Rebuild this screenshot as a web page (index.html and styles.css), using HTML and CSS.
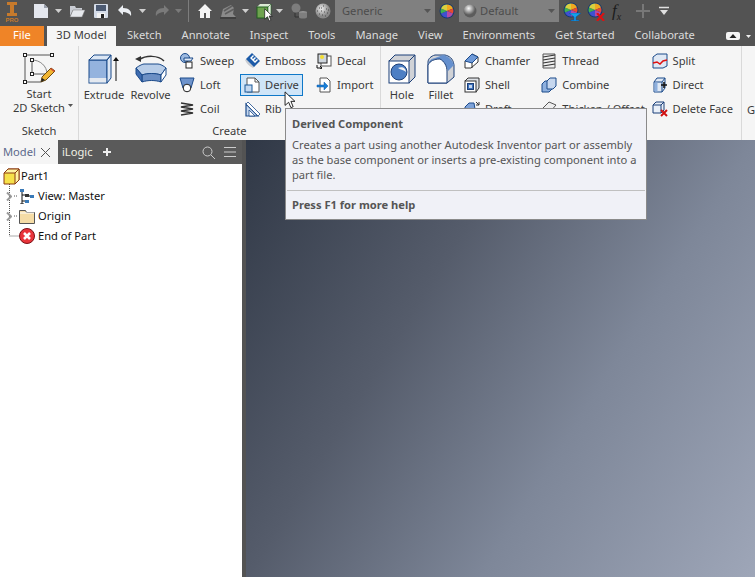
FILE: index.html
```html
<!DOCTYPE html>
<html lang="en">
<head>
<meta charset="utf-8">
<title>Autodesk Inventor</title>
<link rel="stylesheet" href="styles.css">
</head>
<body>
<svg class="defs" width="0" height="0" aria-hidden="true">
  <symbol id="wheel" viewBox="0 0 16 16">
    <circle cx="8" cy="8" r="7.500" fill="#123a73"/>
    <path d="M8 8V1.500A6.500 6.500 0 0 1 14 5.500z" fill="#f0a820"/>
    <path d="M8 8 14 5.500A6.500 6.500 0 0 1 14 10.500z" fill="#e84a30"/>
    <path d="M8 8 14 10.500A6.500 6.500 0 0 1 8 14.500z" fill="#b04aa8"/>
    <path d="M8 8V14.500A6.500 6.500 0 0 1 2 10.500z" fill="#4050d0"/>
    <path d="M8 8 2 10.500A6.500 6.500 0 0 1 2 5.500z" fill="#40b050"/>
    <path d="M8 8 2 5.500A6.500 6.500 0 0 1 8 1.500z" fill="#d8d040"/>
  </symbol>
  <symbol id="caret" viewBox="0 0 7 4"><path d="M0 0h7L3.500 4z"/></symbol>
  <symbol id="cursor" viewBox="0 0 13 20"><path d="M1 1v15l4-3.500 2.500 6 2.500-1-2.500-6H12z" fill="#fff" stroke="#111"/></symbol>
</svg>

<div class="app">
  <header class="qat">
    <svg class="qi logo" width="16" height="22" viewBox="0 0 16 22"><path d="M3 1h10v3H10v8h3v3H3v-3h3V4H3z" fill="#c77a2c"/><text x="8" y="21" class="prd">PRO</text></svg>
    <svg class="qi ml13" width="16" height="16" viewBox="0 0 16 16"><path d="M1 1h10l4 4v10H1z" fill="#e4e7ee"/><path d="M11 1v4h4z" fill="#9aa0ac"/></svg>
    <svg class="cr ml6" width="7" height="4"><use href="#caret"/></svg>
    <svg class="qi ml7" width="16" height="16" viewBox="0 0 16 16"><path d="M1 3h5l1 2h6v2H4L1 13z" fill="#c9ccd3"/><path d="M4 7h12l-3 7H1z" fill="#e6e8ec" stroke="#777" stroke-width=".5"/></svg>
    <svg class="qi ml8" width="16" height="16" viewBox="0 0 16 16"><rect x="1" y="1" width="14" height="14" rx="1" fill="#d5dce8"/><rect x="3" y="2" width="10" height="6" fill="#4c5a72"/><rect x="4" y="10" width="8" height="5" fill="#f2f2f2"/><rect x="8" y="11" width="3" height="4" fill="#222"/></svg>
    <svg class="qi ml8" width="16" height="16" viewBox="0 0 16 16"><path d="M6 2 1 7l5 5V9c3 0 6 1 8 4 1-5-2-8-8-8z" fill="#eceff3"/></svg>
    <svg class="cr ml6" width="7" height="4"><use href="#caret"/></svg>
    <svg class="qi ml8" width="16" height="16" viewBox="0 0 16 16"><path d="M10 2l5 5-5 5V9c-3 0-6 1-8 4-1-5 2-8 8-8z" fill="#7a7a7a"/></svg>
    <svg class="cr dim ml5" width="7" height="4"><use href="#caret"/></svg>
    <span class="qsep"></span>
    <svg class="qi ml8" width="16" height="16" viewBox="0 0 16 16"><path d="M8 1 1 8h2v7h4v-5h2v5h4V8h2z" fill="#f4f4f4"/></svg>
    <svg class="qi ml7" width="16" height="16" viewBox="0 0 16 16"><path d="M1 14 3 6l8-4 3 3-1 6 3 3z" fill="#8a8a8a"/><path d="M4 8l8-5M5 11l9-5" stroke="#5e5e5e" stroke-width="1.500"/><path d="M0 15h16" stroke="#2e2e2e"/></svg>
    <svg class="cr ml6" width="7" height="4"><use href="#caret"/></svg>
    <svg class="qi ml7" width="16" height="16" viewBox="0 0 16 16"><path d="M1 4l3-3h11v11h-3z" fill="#dbe9d4"/><rect x="1" y="4" width="11" height="11" fill="#6ea34f" stroke="#1f5f1f"/><path d="M12 4l3-3v11l-3 3z" fill="#e8f1e3" stroke="#1f5f1f" stroke-width=".6"/></svg>
    <svg class="cr ml4" width="7" height="4"><use href="#caret"/></svg>
    <svg class="qi ml8" width="16" height="16" viewBox="0 0 16 16"><circle cx="5" cy="5" r="4.500" fill="#7d7d7d"/><path d="M4 10v4h4" fill="none" stroke="#333"/><ellipse cx="12" cy="9.500" rx="4" ry="1.500" fill="#9a9a9a"/><path d="M8 9.500v4.500c0 2 8 2 8 0V9.500z" fill="#7e7e7e"/></svg>
    <svg class="qi ml8" width="16" height="16" viewBox="0 0 16 16"><defs><radialGradient id="sg" cx=".4" cy=".35"><stop offset="0" stop-color="#eee"/><stop offset="1" stop-color="#888"/></radialGradient></defs><circle cx="8" cy="8" r="7.500" fill="url(#sg)"/><path d="M4 5h1M8 3h1M11 6h1M6 8h1M9 9h1M4 11h1M12 10h1M7 12h1M10 13h1M2 8h1M6 5h1M13 7h1" stroke="#4a4a4a" stroke-width="1.200"/></svg>
    <div class="combo ml4"><span>Generic</span><svg class="cr dark" width="7" height="4"><use href="#caret"/></svg></div>
    <svg class="qi ml4" width="16" height="16"><use href="#wheel"/></svg>
    <div class="combo small ml4"><svg width="14" height="14" viewBox="0 0 14 14"><defs><radialGradient id="sd" cx=".4" cy=".3"><stop offset="0" stop-color="#fafafa"/><stop offset="1" stop-color="#5c5c5c"/></radialGradient></defs><circle cx="7" cy="7" r="6.500" fill="url(#sd)"/></svg><span>Default</span><svg class="cr dark" width="7" height="4"><use href="#caret"/></svg></div>
    <span class="wheelbox ml4"><svg width="16" height="16"><use href="#wheel"/></svg><svg class="badge" width="12" height="8" viewBox="0 0 12 8"><path d="M0 0h12L7 4v3h3v1H2V7h3V4z" fill="#12a0ea" stroke="#0a4c9c" stroke-width=".5"/></svg></span>
    <span class="wheelbox ml6"><svg width="16" height="16"><use href="#wheel"/></svg><svg class="badge" width="9" height="8" viewBox="0 0 9 8"><path d="M1 0l7 8M8 0 1 8" stroke="#e01010" stroke-width="2"/></svg></span>
    <span class="fx ml7"><i>f</i><sub>x</sub></span>
    <svg class="qi ml8" width="16" height="16" viewBox="0 0 16 16"><path d="M8 1v14M1 8h14" stroke="#787878" stroke-width="2"/></svg>
    <svg class="ml8 qend" width="10" height="10" viewBox="0 0 10 10"><path d="M0 1.500h10" stroke="#e0e0e0" stroke-width="1.500"/><path d="M1 4h8L5 9z" fill="#e0e0e0"/></svg>
  </header>

  <nav class="tabs">
    <span class="tab file">File</span>
    <span class="tab active">3D Model</span>
    <span class="tab">Sketch</span>
    <span class="tab">Annotate</span>
    <span class="tab">Inspect</span>
    <span class="tab">Tools</span>
    <span class="tab">Manage</span>
    <span class="tab">View</span>
    <span class="tab">Environments</span>
    <span class="tab">Get Started</span>
    <span class="tab">Collaborate</span>
    <span class="tabs-end"><svg width="14" height="8" viewBox="0 0 14 8"><rect width="14" height="8" rx="2" fill="#f4f4f4"/><path d="M3.500 6h7L7 2z" fill="#222"/></svg><svg class="cr light" width="5" height="3"><use href="#caret"/></svg></span>
  </nav>

  <section class="ribbon">
    <div class="group g-sketch">
      <div class="panel">
        <button class="big big-sketch">
          <svg width="34" height="32" viewBox="0 0 34 32"><path d="M3 2h27M3 2v27h16" fill="none" stroke="#555"/><path d="M10 7v14h14" fill="none" stroke="#555"/><path d="M10 7c8 0 15 6 15 14" fill="none" stroke="#888"/><g fill="#fff" stroke="#222"><rect x="1.500" y=".5" width="3" height="3"/><rect x="28.500" y=".5" width="3" height="3"/><rect x="1.500" y="27.500" width="3" height="3"/><rect x="8.500" y="5.500" width="3" height="3"/><rect x="8.500" y="19.500" width="3" height="3"/></g><path d="M20 24 29 15l4 3-9 9-5 2z" fill="#f2b632" stroke="#6b4a10"/><path d="M28 16l4 3 1-1-4-3z" fill="#d04a30"/><path d="M19 29l1-4 3 2z" fill="#222"/></svg>
          <span class="two">Start<br>2D Sketch</span>
          <svg class="cr dark sketch-caret" width="5" height="3"><use href="#caret"/></svg>
        </button>
      </div>
      <div class="glabel">Sketch</div>
    </div>

    <div class="group g-create">
      <div class="panel">
        <button class="big w40">
          <svg width="34" height="30" viewBox="0 0 34 30"><path d="M2 6l5-5h17v24l-4 4z" fill="#c6d7ee"/><rect x="2" y="6" width="18" height="23" fill="#94b3de" stroke="#1b4a8a"/><rect x="2.500" y="24" width="17" height="4.500" fill="#e4e9f0"/><path d="M2 6l5-5h17l-4 5zM20 6l4-5v23l-4 5z" fill="#dbe6f4" stroke="#1b4a8a"/><path d="M29 27V5" stroke="#111"/><path d="M26 7l3-4 3 4z" fill="#111"/></svg>
          <span>Extrude</span>
        </button>
        <button class="big w41">
          <svg width="34" height="30" viewBox="0 0 34 30"><path d="M30 7C24 1 12 1 5 6" fill="none" stroke="#333" stroke-width="1.500"/><path d="M1 5l6-3v6z" fill="#333"/><path d="M2 14c8-4 22-4 30 0v8c-9-4-21-4-30 0z" fill="#c3d5ee"/><path d="M2 14c4-3 7-4 8-4h14c2 0 6 2 8 4l-5 7c-6-2-13-2-19 0z" fill="#b8cde8" stroke="#1b4a8a"/><path d="M8 21c6-2 13-2 19 0v7c-6-2-13-2-19 0z" fill="#6b8fc4" stroke="#1b4a8a"/><path d="M2 14l6 7v7l-6-8z" fill="#3f6cb0" stroke="#1b4a8a"/><path d="M32 14l-5 7v7l5-7z" fill="#fff" stroke="#1b4a8a"/></svg>
          <span>Revolve</span>
        </button>
        <div class="col c-a">
          <div class="item"><svg width="16" height="16" viewBox="0 0 16 16"><circle cx="6" cy="5" r="4.500" fill="#9cb9e0" stroke="#1b4a8a"/><path d="M5 5h9l-2 3H5z" fill="#dfe9f5" stroke="#1b4a8a"/><rect x="7" y="9" width="6" height="6" fill="#fff" stroke="#222"/></svg><span>Sweep</span></div>
          <div class="item"><svg width="16" height="16" viewBox="0 0 16 16"><path d="M1 1h14l-3 10-4 4-4-4z" fill="#6f94cc" stroke="#1b4a8a"/><circle cx="8" cy="11" r="3.800" fill="#fff" stroke="#222"/></svg><span>Loft</span></div>
          <div class="item"><svg width="16" height="16" viewBox="0 0 16 16"><path d="M2 2 14 4 2 6l12 2L2 10l12 2-12 2" fill="none" stroke="#333" stroke-width="1.600"/></svg><span>Coil</span></div>
        </div>
        <div class="col c-b">
          <div class="item"><svg width="16" height="16" viewBox="0 0 16 16"><path d="M1 7c2 4 4 6 8 8l2-2L4 5z" fill="#c8ccd2"/><path d="M2 6 8 0l8 8-6 6z" fill="#1b5aa8"/><path d="M6 5l3-3 1 1-2 2 1 1 2-2 1 1-2 2 1 1 2-2 1 1-3 3z" fill="#fff"/></svg><span>Emboss</span></div>
          <div class="item hot"><svg width="16" height="16" viewBox="0 0 16 16"><path d="M3 1h8l4 4v10H3z" fill="#fff" stroke="#555"/><path d="M11 1v4h4" fill="none" stroke="#555"/><rect x="1" y="8" width="7" height="7" fill="#c3d8f0" stroke="#1b5a9a"/></svg><span>Derive</span></div>
          <div class="item"><svg width="16" height="16" viewBox="0 0 16 16"><path d="M2 15V3l12 12z" fill="#c6d7ee" stroke="#1b4a8a" stroke-width="1.200"/><path d="M2 3l2-2 12 12-2 2z" fill="#fff" stroke="#1b4a8a" stroke-width=".8"/><path d="M5 15v-6l6 6z" fill="#fff" stroke="#1b4a8a" stroke-width=".8"/></svg><span>Rib</span></div>
        </div>
        <div class="col c-c">
          <div class="item"><svg width="16" height="16" viewBox="0 0 16 16"><rect x="5" y="3" width="10" height="10" fill="#fff" stroke="#555"/><rect x="2" y="1" width="9" height="9" fill="#cfd6dd" stroke="#222"/><circle cx="6" cy="4" r="2" fill="#f2dd30"/><path d="M1 12v3h5M4 13l2 2-2 1" fill="none" stroke="#111"/></svg><span>Decal</span></div>
          <div class="item"><svg width="16" height="16" viewBox="0 0 16 16"><path d="M4 1h7l3 3v11H4z" fill="#fff" stroke="#555"/><path d="M1 8h7V5l4 4-4 4v-3H1z" fill="#1a80d8" stroke="#0f5aa8" stroke-width=".5"/></svg><span>Import</span></div>
        </div>
      </div>
      <div class="glabel">Create</div>
    </div>

    <div class="group g-modify">
      <div class="panel">
        <button class="big w-hole">
          <svg width="28" height="30" viewBox="0 0 28 30"><path d="M1 7l6-6h20v22l-6 6z" fill="#d0d2d6" stroke="#1b3f78"/><rect x="1" y="7" width="20" height="22" fill="#fff" stroke="#1b3f78"/><path d="M21 7l6-6M1 7l6-6" stroke="#1b3f78"/><circle cx="11" cy="18" r="8" fill="#4d7fc4" stroke="#1b3f78"/><path d="M10 14c4-2 8 0 8 4-2-2-5-2-8-4z" fill="#f4f4f4"/></svg>
          <span>Hole</span>
        </button>
        <button class="big w-fillet">
          <svg width="28" height="30" viewBox="0 0 28 30"><path d="M20 29h-19V8C1 5 4 2 8 1h10c4 1 8 3 9 10v12z" fill="#d0d2d6" stroke="#1b3f78"/><path d="M1 12c0-4 2-7 7-8l8-3c5 1 9 4 11 10l-6 6C20 11 15 6 8 5 5 6 3 8 1 12z" fill="#6590ce"/><path d="M1 11c2-4 6-6 12-6 4 2 7 7 7 12v12H1z" fill="#fff" stroke="#1b3f78"/></svg>
          <span>Fillet</span>
        </button>
        <div class="col c-d">
          <div class="item"><svg width="16" height="16" viewBox="0 0 16 16"><path d="M1 8l7-7 6 3v5l-7 6H1z" fill="#fff" stroke="#333"/><path d="M1 8l7-7 6 3-6 6z" fill="#6f9ad8" stroke="#1b4a8a"/><path d="M8 10v5" stroke="#333"/></svg><span>Chamfer</span></div>
          <div class="item"><svg width="16" height="16" viewBox="0 0 16 16"><path d="M1 4l3-3h11v10l-3 4z" fill="#dfe3e8" stroke="#333"/><rect x="1" y="4" width="11" height="11" fill="#fff" stroke="#333"/><rect x="3.500" y="6.500" width="6" height="6" fill="#3f72bc" stroke="#1b3f78"/><rect x="5" y="8" width="3" height="3" fill="#c6d7ee"/></svg><span>Shell</span></div>
          <div class="item"><svg width="16" height="16" viewBox="0 0 16 16"><path d="M1 14V6l4-4h5l2 12z" fill="#7da2d8" stroke="#1b4a8a"/><path d="M12 1l3 3M15 1v3h-3" fill="none" stroke="#333"/></svg><span>Draft</span></div>
        </div>
        <div class="col c-e">
          <div class="item"><svg width="16" height="16" viewBox="0 0 16 16"><path d="M2 1h12v14H2z" fill="#eee" stroke="#555"/><path d="M2 4l12-2M2 7l12-2M2 10l12-2M2 13l12-2" stroke="#333" stroke-width="1.200"/></svg><span>Thread</span></div>
          <div class="item"><svg width="16" height="16" viewBox="0 0 16 16"><path d="M1 7l3-3h7v8l-3 3H1z" fill="#8eb0de" stroke="#1b4a8a"/><path d="M6 4l3-3h6v8l-3 3H6z" fill="#c6d7ee" stroke="#1b4a8a"/></svg><span>Combine</span></div>
          <div class="item"><svg width="16" height="16" viewBox="0 0 16 16"><path d="M1 8l7-7 7 3-6 7z" fill="#eee" stroke="#555"/></svg><span>Thicken / Offset</span></div>
        </div>
        <div class="col c-f">
          <div class="item"><svg width="16" height="16" viewBox="0 0 16 16"><path d="M1 4l4-3h10v12l-4 2H1z" fill="#dfe8f4" stroke="#1b4a8a"/><path d="M1 10l4-1 3 2 3-3 4-1" fill="none" stroke="#e01010" stroke-width="1.500"/></svg><span>Split</span></div>
          <div class="item"><svg width="16" height="16" viewBox="0 0 16 16"><path d="M2 5l3-4h8v10l-3 4H2z" fill="#dfe8f4" stroke="#1b4a8a"/><path d="M2 5h8v10M10 5l3-4" fill="none" stroke="#1b4a8a"/><rect x="2.500" y="5.500" width="3" height="9" fill="#8eb0de"/><path d="M9 8h6M12 5v6" stroke="#111" stroke-width="1.500"/></svg><span>Direct</span></div>
          <div class="item"><svg width="16" height="16" viewBox="0 0 16 16"><path d="M1 4l3-3h8v8l-3 3H1z" fill="#eaf0f8" stroke="#1b3f78"/><path d="M1 4h8v8M9 4l3-3" fill="none" stroke="#1b3f78"/><path d="M9 9l6 6M15 9l-6 6" stroke="#d01010" stroke-width="2"/></svg><span>Delete Face</span></div>
        </div>
      </div>
      <div class="glabel">Modify</div>
    </div>
    <div class="group g-next"><span class="next-g">G</span></div>
  </section>

  <main class="work">
    <aside class="browser">
      <div class="btabs">
        <div class="btab"><span>Model</span><svg width="9" height="9" viewBox="0 0 9 9"><path d="M0 0l9 9M9 0 0 9" stroke="#555"/></svg></div>
        <div class="bbar">
          <span class="ilogic">iLogic</span>
          <svg class="bplus" width="8" height="8" viewBox="0 0 8 8"><path d="M4 0v8M0 4h8" stroke="#eee" stroke-width="2"/></svg>
          <svg class="bsearch" width="13" height="13" viewBox="0 0 13 13"><circle cx="5.500" cy="5.500" r="4.500" fill="none" stroke="#ccc"/><path d="M9 9l4 4" stroke="#ccc"/></svg>
          <svg class="bmenu" width="12" height="10" viewBox="0 0 12 10"><path d="M0 .5h12M0 5h12M0 9.500h12" stroke="#ccc"/></svg>
        </div>
      </div>
      <div class="tree">
        <svg class="lines" width="30" height="76" viewBox="0 0 30 76"><path d="M9.500 0V52M9.500 52H20M14 12h4M14 32h4" fill="none" stroke="#555" stroke-dasharray="1 1"/></svg>
        <div class="row root"><svg width="17" height="17" viewBox="0 0 17 17"><path d="M1 5l4-4h11v11l-4 4H1z" fill="#f6e14a" stroke="#8a3a10"/><path d="M1 5l4-4h11l-4 4zM12 5l4-4v11l-4 4z" fill="#fff3a0" stroke="#8a3a10"/></svg><span>Part1</span></div>
        <div class="row"><svg class="chev" width="6" height="9" viewBox="0 0 6 9"><path d="M1 .5 5 4.500 1 8.500" fill="none" stroke="#999" stroke-width="2"/></svg><svg width="16" height="15" viewBox="0 0 16 15"><rect x="1" y="0" width="4" height="3" fill="#3a7ab8"/><rect x="6" y="5" width="4" height="3" fill="#333"/><rect x="11" y="6" width="4" height="3" fill="#3a7ab8"/><rect x="6" y="11" width="4" height="3" fill="#3a7ab8"/><path d="M3 3v12M1 15h4M3 6h3M3 12h3M10 7h1" fill="none" stroke="#111"/></svg><span>View: Master</span></div>
        <div class="row"><svg class="chev" width="6" height="9" viewBox="0 0 6 9"><path d="M1 .5 5 4.500 1 8.500" fill="none" stroke="#999" stroke-width="2"/></svg><svg width="16" height="15" viewBox="0 0 16 15"><path d="M.5 14.500V1.500h6l1 2h8v11z" fill="#f5dca6" stroke="#555"/><path d="M1 4h14" stroke="#fff"/></svg><span>Origin</span></div>
        <div class="row"><span class="spacer"></span><svg width="16" height="16" viewBox="0 0 16 16"><circle cx="8" cy="8" r="7.500" fill="#e8343a" stroke="#7a1015"/><path d="M5 5l6 6M11 5l-6 6" stroke="#fff" stroke-width="2.500"/></svg><span>End of Part</span></div>
      </div>
    </aside>
    <div class="strip"></div>
    <div class="viewport"></div>
  </main>

  <svg class="pointer p1" width="9" height="14"><use href="#cursor"/></svg>
  <svg class="pointer p2" width="12" height="18"><use href="#cursor"/></svg>
  <div class="tooltip">
    <div class="tt-title">Derived Component</div>
    <p class="tt-body">Creates a part using another Autodesk Inventor part or assembly as the base component or inserts a pre-existing component into a part file.</p>
    <div class="tt-help">Press F1 for more help</div>
  </div>
</div>
</body>
</html>
```

FILE: styles.css
```css
* { box-sizing: border-box; }
html, body { margin: 0; padding: 0; height: 100%; overflow: hidden; }
body { font: 11.15px/15px "Noto Sans", Tahoma, sans-serif; color: #3a3a3a; }
.defs { position: absolute; }
.app { position: relative; width: 755px; height: 577px; display: flex; flex-direction: column; overflow: hidden; background: #535353; }
svg { flex: none; display: block; }

.qat { height: 26px; flex: none; background: #535353; display: flex; align-items: center; padding: 0 0 4px 4px; }
.logo { margin-top: 1px; }
.prd { font: bold 6px "Liberation Sans", sans-serif; fill: #c77a2c; text-anchor: middle; }
.cr { fill: #cfcfcf; }
.cr.dim { fill: #7a7a7a; }
.cr.dark { fill: #555; }
.cr.light { fill: #eee; }
.ml4 { margin-left: 4px; } .ml5 { margin-left: 5px; } .ml6 { margin-left: 6px; }
.ml7 { margin-left: 7px; } .ml8 { margin-left: 8px; } .ml13 { margin-left: 13px; }
.qsep { width: 1px; height: 22px; background: #7d7d7d; margin-left: 6px; }
.combo { width: 100px; height: 22px; background: #808080; color: #4c4c4c; display: flex; align-items: center; padding: 0 4px 0 7px; flex: none; }
.combo span { flex: 1; margin-bottom: 2px; }
.combo.small { padding-left: 4px; gap: 3px; }
.wheelbox { position: relative; width: 18px; height: 18px; flex: none; }
.badge { position: absolute; right: 0; bottom: -1px; }
.fx { width: 15px; font: italic 15px/16px "Liberation Serif", serif; color: #1c1c1c; white-space: nowrap; }
.fx i { font-size: 17px; }
.fx sub { font-size: 10px; line-height: 0; }

.tabs { height: 20px; flex: none; display: flex; background: #535353; color: #dcdcdc; line-height: 18px; }
.tab { padding: 0 10px; white-space: nowrap; flex: none; }
.tab.file { width: 44px; padding: 0; margin-right: 3px; text-align: center; background: #ef8427; color: #fff; }
.tab.active { width: 69px; padding: 0; text-align: center; background: #f5f5f5; color: #3a3a3a; margin-right: 1px; }
.tabs-end { margin-left: auto; display: flex; align-items: center; gap: 6px; padding-right: 4px; }

.ribbon { height: 94px; flex: none; background: #f5f5f5; display: flex; }
.group { display: flex; flex-direction: column; border-right: 1px solid #d9d9d9; }
.g-sketch { width: 79px; }
.g-create { width: 302px; }
.g-modify { width: 361px; }
.g-next { flex: 1; border: 0; }
.next-g { display: block; padding: 56px 0 0 5px; }
.panel { flex: 1; display: flex; padding-top: 3px; }
.glabel { height: 18px; text-align: center; line-height: 17px; }
.big { border: 0; background: none; padding: 0; margin: 0; font: inherit; color: inherit; display: flex; flex-direction: column; align-items: center; position: relative; white-space: nowrap; }
.big svg:first-child { margin: 4px 0 2px; height: 32px; }
.big-sketch { width: 78px; height: 70px; }
.sketch-caret { position: absolute; left: 68px; top: 55px; }
.two { line-height: 14px; }
.w40 { width: 40px; margin-left: 5px; }
.w41 { width: 41px; margin-left: 6px; }
.w-hole { width: 28px; margin-left: 7px; }
.w-fillet { width: 28px; margin-left: 11px; }
.col { display: flex; flex-direction: column; }
.item { height: 24px; display: flex; align-items: center; gap: 5px; white-space: nowrap; }
.item span, .row span, .btab span, .ilogic { margin-bottom: 2px; }
.hot { height: 22px; margin: 1px 0 1px -4px; padding-left: 3px; width: 63px; background: #cfe5f8; border: 1px solid #0f78c8; }
.c-a { width: 61px; margin-left: 8px; }
.c-b { width: 72px; margin-left: 4px; }
.c-d { width: 78px; margin-left: 9px; }
.c-e { width: 111px; }
.c-f { width: 90px; }

.work { flex: 1; min-height: 0; display: flex; }
.browser { width: 242px; flex: none; background: #fff; display: flex; flex-direction: column; }
.btabs { height: 24px; flex: none; display: flex; background: #5a5a5a; }
.btab { width: 58px; background: #f5f5f5; display: flex; align-items: center; justify-content: space-between; padding: 0 8px 0 3px; color: #5c6a8c; }
.bbar { flex: 1; display: flex; align-items: center; padding: 0 6px 0 4px; color: #f0f0e4; }
.bplus { margin-left: 10px; }
.bsearch { margin-left: auto; }
.bmenu { margin-left: 9px; }
.tree { position: relative; flex: 1; padding-top: 2px; color: #111; }
.lines { position: absolute; left: 0; top: 20px; }
.row { height: 20px; display: flex; align-items: center; padding-left: 6px; gap: 3px; position: relative; }
.root { padding-left: 3px; gap: 1px; }
.chev { margin-right: 4px; }
.spacer { width: 10px; }
.strip { width: 4px; flex: none; background: #535353; }
.viewport { flex: 1; background: linear-gradient(122deg, #303846 0%, #555c6b 35%, #7e8799 65%, #9ea6b8 100%); }

.tooltip { position: absolute; left: 285px; top: 108px; width: 362px; height: 112px; background: #f0f1f7; border: 1px solid #8a8a8a; color: #555; padding: 0 1px; }
.tt-title { font-weight: bold; height: 26px; padding: 7px 5px 0; }
.tt-body { margin: 2px 0 0; padding: 0 5px; height: 50px; }
.tt-help { font-weight: bold; border-top: 1px solid #c0c0c0; padding: 6px 5px 0; margin-top: 3px; }
.pointer { position: absolute; }
.p1 { left: 264px; top: 8px; }
.p2 { left: 284px; top: 91px; }
```
